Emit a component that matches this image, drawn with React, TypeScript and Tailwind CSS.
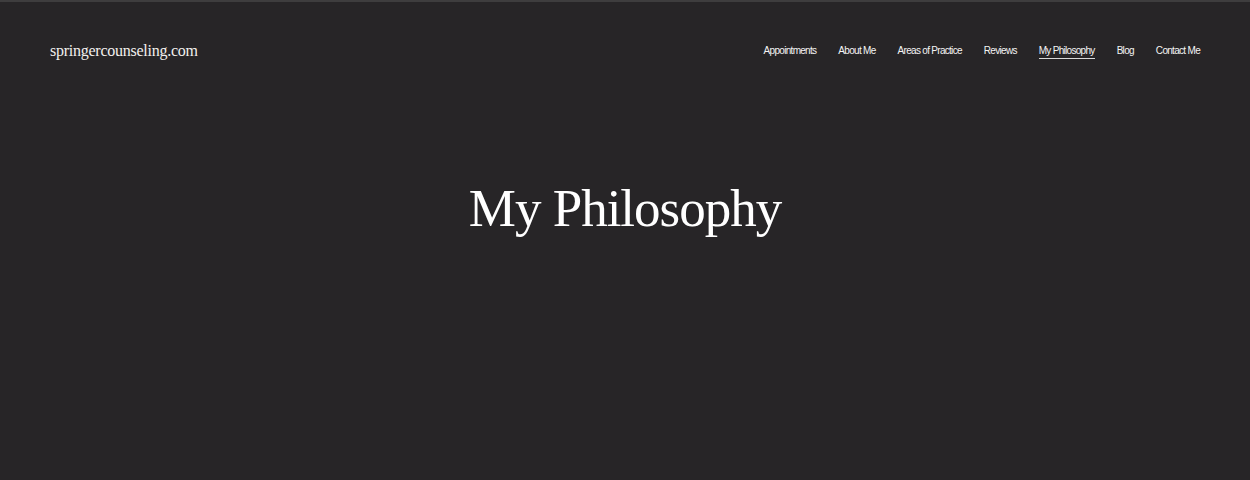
import React from "react";

const nav = ["Appointments", "About Me", "Areas of Practice", "Reviews", "My Philosophy", "Blog", "Contact Me"];

export default function App() {
  return (
    <div className="w-[1250px] h-[480px] overflow-hidden bg-[#272527] border-t-2 border-[#3e3d3e] flex flex-col">
      <header className="flex items-center justify-between pl-[50px] pr-[50px] pt-[39px]">
        <div className="text-[16px] leading-[20px] text-[#f2f0ee] tracking-[-0.25px]" style={{ fontFamily: '"Liberation Serif", serif' }}>
          springercounseling.com
        </div>
        <nav className="flex items-center gap-[22px]">
          {nav.map((n) => (
            <span
              key={n}
              className={
                "text-[10px] leading-[13px] text-[#f4f4f4] tracking-[-0.7px] pb-[1px] border-b " +
                (n === "My Philosophy" ? "border-[#d8d8d8]" : "border-transparent")
              }
              style={{ fontFamily: '"Liberation Sans", Arial, sans-serif' }}
            >
              {n}
            </span>
          ))}
        </nav>
      </header>
      <main className="flex justify-center pt-[117px]">
        <h1 className="text-[53px] leading-[60px] text-white tracking-[-1px]" style={{ fontFamily: '"Liberation Serif", serif' }}>
          My Philosophy
        </h1>
      </main>
    </div>
  );
}
